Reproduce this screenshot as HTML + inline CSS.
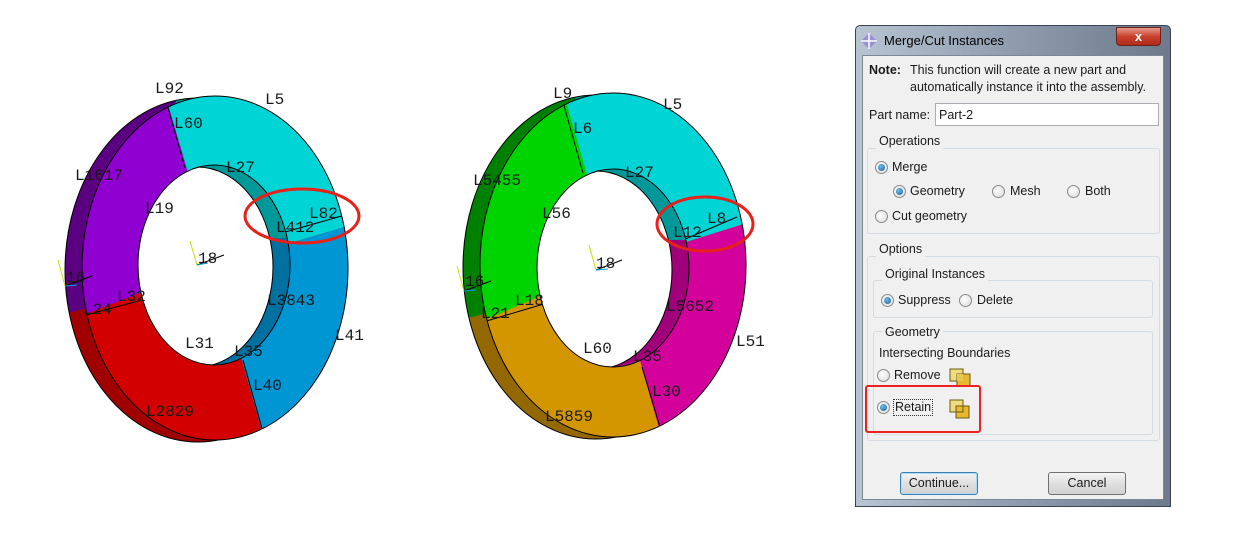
<!DOCTYPE html>
<html><head><meta charset="utf-8"><style>
body{margin:0;width:1234px;height:535px;background:#fff;position:relative;overflow:hidden;font-family:"Liberation Sans",sans-serif}
.a{position:absolute}
.t{position:absolute;font-size:12.5px;color:#1a1a1a;white-space:nowrap;line-height:15px}
.r{position:absolute;width:11px;height:11px;border-radius:50%;border:1px solid #8a8a8a;background:radial-gradient(circle at 40% 40%,#fff,#d8d8d8)}
.r.on::after{content:"";position:absolute;left:2px;top:2px;width:7px;height:7px;border-radius:50%;background:radial-gradient(circle at 40% 35%,#6ac0f0,#1a5a90)}
.g{position:absolute;border:1px solid #d4dbe2;border-radius:3px}
.gl{position:absolute;background:#f0f0f0;padding:0 3px;font-size:12.5px;color:#1a1a1a;line-height:15px}
.btn{position:absolute;height:21px;border:1px solid #707070;border-radius:3px;background:linear-gradient(#f4f4f4,#e0e0e0 50%,#d2d2d2);font-size:12.5px;text-align:center;line-height:21px;color:#1a1a1a}
svg text{font-family:"Liberation Mono",monospace;font-size:16px;fill:#1a1a1a}
</style></head><body>
<svg class="a" style="left:0;top:0" width="820" height="535" viewBox="0 0 820 535">
<defs>
<clipPath id="r1f"><path clip-rule="evenodd" d="M82,268a133,172 0 1,0 266,0a133,172 0 1,0 -266,0Z M138,265a76,100 0 1,0 152,0a76,100 0 1,0 -152,0Z"/></clipPath>
<clipPath id="r1b"><path clip-rule="evenodd" d="M65,270a133,172 0 1,0 266,0a133,172 0 1,0 -266,0Z M121,267a76,100 0 1,0 152,0a76,100 0 1,0 -152,0Z"/></clipPath>
<clipPath id="h1"><ellipse cx="214" cy="265" rx="76" ry="100"/></clipPath>
<clipPath id="r2f"><path clip-rule="evenodd" d="M480,265a133,172 0 1,0 266,0a133,172 0 1,0 -266,0Z M537,268a76,99 0 1,0 152,0a76,99 0 1,0 -152,0Z"/></clipPath>
<clipPath id="r2b"><path clip-rule="evenodd" d="M463,267a133,172 0 1,0 266,0a133,172 0 1,0 -266,0Z M520,270a76,99 0 1,0 152,0a76,99 0 1,0 -152,0Z"/></clipPath>
<clipPath id="h2"><ellipse cx="613" cy="268" rx="76" ry="99"/></clipPath>
</defs>
<!-- ring 1 back -->
<g clip-path="url(#r1b)">
<rect x="0" y="0" width="420" height="535" fill="#a00000"/>
<polygon points="0,0 160,0 180,100 120,300 0,330" fill="#5a0080"/>
<polygon points="160,0 420,0 420,215 200,260" fill="#009a9a"/>
</g>
<path d="M65,270a133,172 0 1,0 266,0a133,172 0 1,0 -266,0Z" fill="none" stroke="#000"/>
<!-- ring 1 front -->
<g clip-path="url(#r1f)">
<rect x="0" y="0" width="420" height="535" fill="#d20000"/>
<polygon points="215,265 158,70 0,70 0,330 75,318" fill="#9000d0"/>
<polygon points="215,265 158,70 420,70 420,205" fill="#00d4d4"/>
<polygon points="215,265 420,205 420,535 270,460" fill="#0096d4"/>
<polyline points="165,97 185,168" stroke="#000" fill="none"/><polyline points="345,215 268,237" stroke="#000" fill="none"/><polyline points="263,432 243,360" stroke="#000" fill="none"/><polyline points="75,318 142,300" stroke="#000" fill="none"/>
</g>
<path d="M82,268a133,172 0 1,0 266,0a133,172 0 1,0 -266,0Z" fill="none" stroke="#000" stroke-width="1"/>
<g clip-path="url(#h1)">
<rect x="130" y="160" width="170" height="100" fill="#009898"/>
<rect x="130" y="238" width="170" height="140" fill="#0070a0"/>
<ellipse cx="197" cy="267" rx="76" ry="100" fill="#fff" stroke="#000"/>
</g>
<ellipse cx="214" cy="265" rx="76" ry="100" fill="none" stroke="#000"/>
<!-- ring 2 back -->
<g clip-path="url(#r2b)">
<rect x="420" y="0" width="400" height="535" fill="#946800"/>
<polygon points="420,0 560,0 580,100 540,300 420,330" fill="#008000"/>
<polygon points="560,0 820,0 820,215 600,260" fill="#009a9a"/>
</g>
<path d="M463,267a133,172 0 1,0 266,0a133,172 0 1,0 -266,0Z" fill="none" stroke="#000"/>
<g clip-path="url(#r2f)">
<rect x="420" y="0" width="400" height="535" fill="#d49600"/>
<polygon points="613,265 557,70 420,70 420,330 473,325" fill="#00d400"/>
<polygon points="613,265 557,70 820,70 820,200" fill="#00d4d4"/>
<polygon points="613,265 820,200 820,535 668,460" fill="#d4009c"/>
<polyline points="563,102 583,173" stroke="#000" fill="none"/><polyline points="737,217 683,240" stroke="#000" fill="none"/><polyline points="663,437 642,367" stroke="#000" fill="none"/><polyline points="473,325 547,303" stroke="#000" fill="none"/>
</g>
<path d="M480,265a133,172 0 1,0 266,0a133,172 0 1,0 -266,0Z" fill="none" stroke="#000"/>
<g clip-path="url(#h2)">
<rect x="530" y="160" width="170" height="80" fill="#009898"/>
<rect x="530" y="240" width="170" height="140" fill="#a0007a"/>
<ellipse cx="596" cy="270" rx="76" ry="99" fill="#fff" stroke="#000"/>
</g>
<ellipse cx="613" cy="268" rx="76" ry="99" fill="none" stroke="#000"/>
<!-- triads -->
<g stroke-width="1">
<line x1="190" y1="241" x2="197" y2="265" stroke="#c8e000"/><line x1="197" y1="265" x2="224" y2="255" stroke="#000"/><line x1="197" y1="265" x2="208" y2="263" stroke="#00a0e0"/>
<line x1="58" y1="260" x2="65" y2="286" stroke="#c8e000"/><line x1="65" y1="286" x2="92" y2="276" stroke="#000"/><line x1="65" y1="286" x2="77" y2="285" stroke="#00a0e0"/>
<line x1="589" y1="245" x2="596" y2="270" stroke="#c8e000"/><line x1="596" y1="270" x2="622" y2="260" stroke="#000"/><line x1="596" y1="270" x2="608" y2="269" stroke="#00a0e0"/>
<line x1="457" y1="266" x2="464" y2="291" stroke="#c8e000"/><line x1="464" y1="291" x2="491" y2="281" stroke="#000"/><line x1="464" y1="291" x2="476" y2="290" stroke="#00a0e0"/>
</g>
<!-- labels ring1 -->
<text x="155" y="93">L92</text><text x="265" y="104">L5</text><text x="174" y="128">L60</text><text x="226" y="172">L27</text>
<text x="75" y="180">L1617</text><text x="145" y="213">L19</text><text x="309" y="218">L82</text><text x="276" y="232">L412</text>
<text x="198" y="263">18</text><text x="66" y="282">16</text><text x="117" y="301">L32</text><text x="83" y="314">L24</text>
<text x="267" y="305">L3843</text><text x="185" y="348">L31</text><text x="335" y="340">L41</text><text x="234" y="356">L35</text>
<text x="253" y="390">L40</text><text x="146" y="416">L2829</text>
<!-- labels ring2 -->
<text x="553" y="98">L9</text><text x="663" y="109">L5</text><text x="573" y="133">L6</text><text x="625" y="177">L27</text>
<text x="473" y="185">L5455</text><text x="542" y="218">L56</text><text x="707" y="223">L8</text><text x="673" y="237">L12</text>
<text x="596" y="268">18</text><text x="465" y="286">16</text><text x="515" y="305">L18</text><text x="481" y="318">L21</text>
<text x="666" y="311">L5652</text><text x="583" y="353">L60</text><text x="736" y="346">L51</text><text x="633" y="361">L35</text>
<text x="652" y="396">L30</text><text x="545" y="421">L5859</text>
<ellipse cx="302" cy="216" rx="57" ry="27" fill="none" stroke="#e8201a" stroke-width="3"/>
<ellipse cx="705" cy="224" rx="48" ry="27" fill="none" stroke="#e8201a" stroke-width="3"/>
</svg>

<!-- dialog -->
<div class="a" style="left:855px;top:25px;width:316px;height:482px;background:linear-gradient(90deg,#b8c4d2,#8e9cae 50%,#6c7a8c);border:1px solid #3a4552;box-sizing:border-box;border-radius:5px 5px 0 0"></div>
<div class="a" style="left:862px;top:55px;width:302px;height:445px;background:#f0f0f0;border:1px solid #7b8794;box-sizing:border-box"></div>
<div class="a" style="left:859px;top:31px;width:20px;height:20px;">
<svg width="20" height="20"><path d="M2,10L10,2L18,10L10,18Z" fill="#9a8ed8"/><path d="M2,10H18M10,2V18" stroke="#fff" stroke-width="1.5"/></svg></div>
<div class="t" style="left:884px;top:33px;font-size:13px;color:#000">Merge/Cut Instances</div>
<div class="a" style="left:1116px;top:27px;width:45px;height:19px;border:1px solid #6a2020;border-radius:0 0 4px 4px;background:linear-gradient(#e89a8a,#c8402c 50%,#b02a18);box-sizing:border-box;color:#fff;font-weight:bold;font-size:13px;text-align:center;line-height:17px">x</div>

<div class="t" style="left:869px;top:63px"><b>Note:</b></div>
<div class="t" style="left:910px;top:63px">This function will create a new part and</div>
<div class="t" style="left:910px;top:80px">automatically instance it into the assembly.</div>
<div class="t" style="left:869px;top:108px">Part name:</div>
<div class="a" style="left:935px;top:103px;width:224px;height:23px;background:#fff;border:1px solid #abadb3;box-sizing:border-box"></div>
<div class="t" style="left:939px;top:108px">Part-2</div>

<div class="g" style="left:867px;top:148px;width:291px;height:84px"></div>
<div class="gl" style="left:876px;top:134px">Operations</div>
<div class="r on" style="left:875px;top:161px"></div><div class="t" style="left:892px;top:160px">Merge</div>
<div class="r on" style="left:893px;top:185px"></div><div class="t" style="left:910px;top:184px">Geometry</div>
<div class="r" style="left:992px;top:185px"></div><div class="t" style="left:1010px;top:184px">Mesh</div>
<div class="r" style="left:1067px;top:185px"></div><div class="t" style="left:1085px;top:184px">Both</div>
<div class="r" style="left:875px;top:210px"></div><div class="t" style="left:892px;top:209px">Cut geometry</div>

<div class="g" style="left:867px;top:256px;width:291px;height:183px"></div>
<div class="gl" style="left:876px;top:242px">Options</div>
<div class="g" style="left:873px;top:280px;width:278px;height:36px"></div>
<div class="gl" style="left:882px;top:267px">Original Instances</div>
<div class="r on" style="left:881px;top:294px"></div><div class="t" style="left:898px;top:293px">Suppress</div>
<div class="r" style="left:959px;top:294px"></div><div class="t" style="left:977px;top:293px">Delete</div>
<div class="g" style="left:873px;top:331px;width:278px;height:102px"></div>
<div class="gl" style="left:882px;top:325px">Geometry</div>
<div class="t" style="left:879px;top:346px">Intersecting Boundaries</div>
<div class="r" style="left:877px;top:369px"></div><div class="t" style="left:894px;top:368px">Remove</div>
<svg class="a" style="left:949px;top:368px" width="24" height="20"><rect x="1" y="1" width="13" height="12" fill="#f0dc80" stroke="#6a5a10"/><rect x="8" y="6" width="13" height="12" fill="#e8b830" stroke="#6a5a10"/><rect x="8" y="6" width="6" height="7" fill="#e8c850"/></svg>
<div class="r on" style="left:877px;top:401px"></div>
<div class="t" style="left:893px;top:399px;border:1px dotted #333;padding:0 1px">Retain</div>
<svg class="a" style="left:949px;top:399px" width="24" height="22"><rect x="1" y="1" width="13" height="12" fill="#f0dc80" stroke="#6a5a10"/><rect x="7" y="7" width="13" height="12" fill="#e8b830" stroke="#6a5a10"/><rect x="7" y="7" width="7" height="6" fill="none" stroke="#6a5a10"/></svg>
<div class="a" style="left:865px;top:385px;width:116px;height:48px;border:2px solid #ee2020;border-radius:3px;box-sizing:border-box"></div>

<div class="btn" style="left:900px;top:472px;width:76px;border-color:#3c7fb1;box-shadow:inset 0 0 0 1px #a8dcf8">Continue...</div>
<div class="btn" style="left:1048px;top:472px;width:76px">Cancel</div>
</body></html>
